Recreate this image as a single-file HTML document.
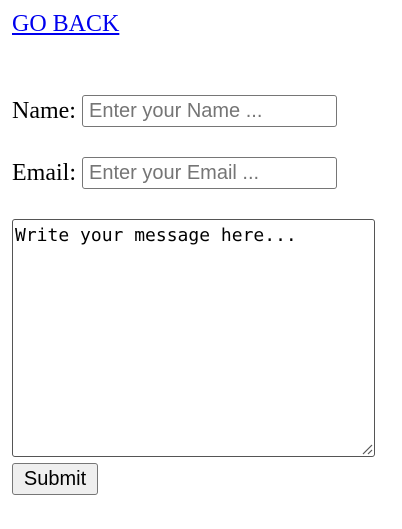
<!DOCTYPE html>
<html><head><style>
body{margin:0;width:402px;height:529px;background:#fff;position:relative;overflow:hidden}
.a{position:absolute;font-family:"Liberation Serif",serif;font-size:24px;color:#000;line-height:26px}
a{color:#0000EE;text-decoration:underline}
.in{position:absolute;box-sizing:border-box;border:1px solid #767676;border-radius:3px;background:#fff;font-family:"Liberation Sans",sans-serif;font-size:20px;color:#757575;padding-left:6px;line-height:30px}
</style></head><body>
<div class="a" style="left:12px;top:11px"><a>GO BACK</a></div>
<div class="a" style="left:12px;top:98px">Name:</div>
<div class="in" style="left:82px;top:95px;width:255px;height:32px">Enter your Name ...</div>
<div class="a" style="left:12px;top:160px">Email:</div>
<div class="in" style="left:82px;top:157px;width:255px;height:32px">Enter your Email ...</div>
<div style="position:absolute;left:12px;top:219px;width:363px;height:238px;box-sizing:border-box;border:1px solid #555;border-radius:3px;font-family:'DejaVu Sans Mono','Liberation Mono',monospace;font-size:18px;color:#000;padding:4px 2px;line-height:24px">Write your message here...
<svg style="position:absolute;right:1px;bottom:1px" width="12" height="12"><path d="M11 2L2 11M11 7L7 11" stroke="#555" stroke-width="1.2"/></svg></div>
<div style="position:absolute;left:12px;top:463px;width:86px;height:32px;box-sizing:border-box;border:1px solid #767676;border-radius:3px;background:#efefef;font-family:'Liberation Sans',sans-serif;font-size:20px;text-align:center;line-height:30px;color:#000">Submit</div>
</body></html>
